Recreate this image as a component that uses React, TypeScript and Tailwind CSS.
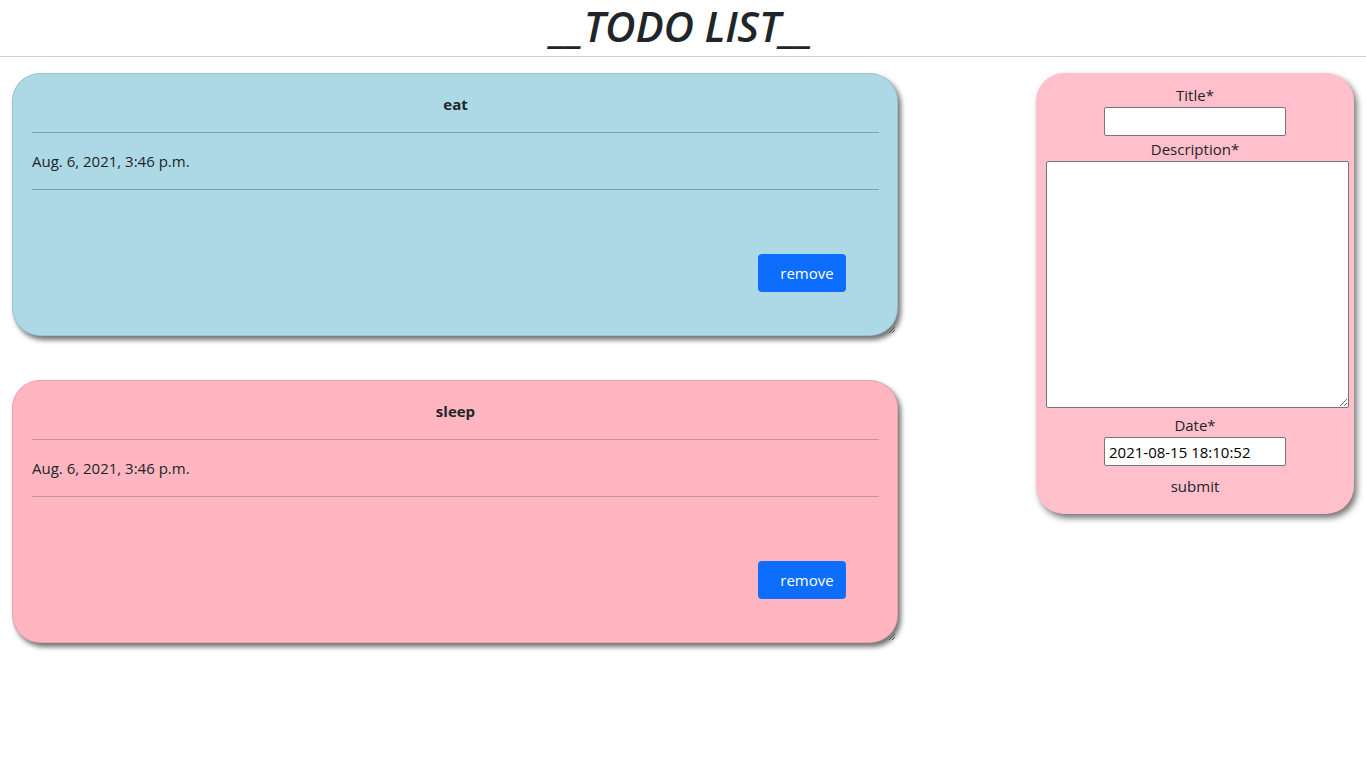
const todos = [
  { title: 'eat', date: 'Aug. 6, 2021, 3:46 p.m.', bg: 'bg-[#add8e6]', line: 'border-[#7fa3b0]' },
  { title: 'sleep', date: 'Aug. 6, 2021, 3:46 p.m.', bg: 'bg-[#ffb6c1]', line: 'border-[#c8939b]' },
];

const App = () => {
  return (
    <div className="min-h-screen bg-white text-[#212529] font-['Open_Sans',sans-serif]">
      {/* Header */}
      <header className="h-[57px] border-b border-[#d0d0d0] flex justify-center">
        <h1 className="h-[56px] px-2 ml-[-2px] text-[42px] leading-[52px] font-semibold italic tracking-[-0.2px] whitespace-nowrap">
          __TODO LIST__
        </h1>
      </header>

      <div className="flex justify-between items-start px-3 pt-4">
        {/* Todo cards */}
        <div className="flex flex-col gap-[44px]">
          {todos.map((todo) => (
            <div
              key={todo.title}
              className={`relative w-[886px] h-[263px] rounded-[28px] ${todo.bg} border border-black/10 shadow-[3px_4px_5px_rgba(0,0,0,0.55)] pt-[18px] pl-[19px] pr-[18px] flex flex-col`}
            >
              <div className="text-center text-[15px] font-bold leading-6">{todo.title}</div>
              <hr className={`mt-[16px] border-t ${todo.line}`} />
              <div className="mt-[16px] text-[15px] leading-6">{todo.date}</div>
              <hr className={`mt-[16px] border-t ${todo.line}`} />
              <div className="mt-[64px] flex justify-end pr-[33px]">
                <button className="w-[88px] h-[38px] rounded-[4px] bg-[#0d6efd] text-white text-[15px] pl-[20px] pr-[10px]">
                  remove
                </button>
              </div>
              {/* resize grip */}
              <svg className="absolute right-[1px] bottom-[1px]" width="9" height="9" viewBox="0 0 9 9">
                <path d="M8 2 L2 8 M8 5 L5 8" stroke="#555" strokeWidth="1" />
              </svg>
            </div>
          ))}
        </div>

        {/* Form */}
        <form className="w-[318px] h-[441px] rounded-[28px] bg-[#ffc0cb] shadow-[3px_4px_6px_rgba(0,0,0,0.55)] pt-[10px] flex flex-col items-center text-[15px]">
          <label className="leading-6">Title*</label>
          <input className="w-[182px] h-[29px] bg-white border border-[#767676] rounded-[2px]" />
          <label className="mt-[1px] leading-6">Description*</label>
          <textarea className="self-start ml-[10px] w-[303px] h-[247px] bg-white border border-[#767676] rounded-[2px]" />
          <label className="mt-[5px] leading-6">Date*</label>
          <input
            className="w-[182px] h-[29px] bg-white border border-[#767676] rounded-[2px] px-[4px] text-[15px] text-black"
            defaultValue="2021-08-15 18:10:52"
          />
          <button type="button" className="mt-[8px] leading-6">submit</button>
        </form>
      </div>
    </div>
  );
};

export default App;
